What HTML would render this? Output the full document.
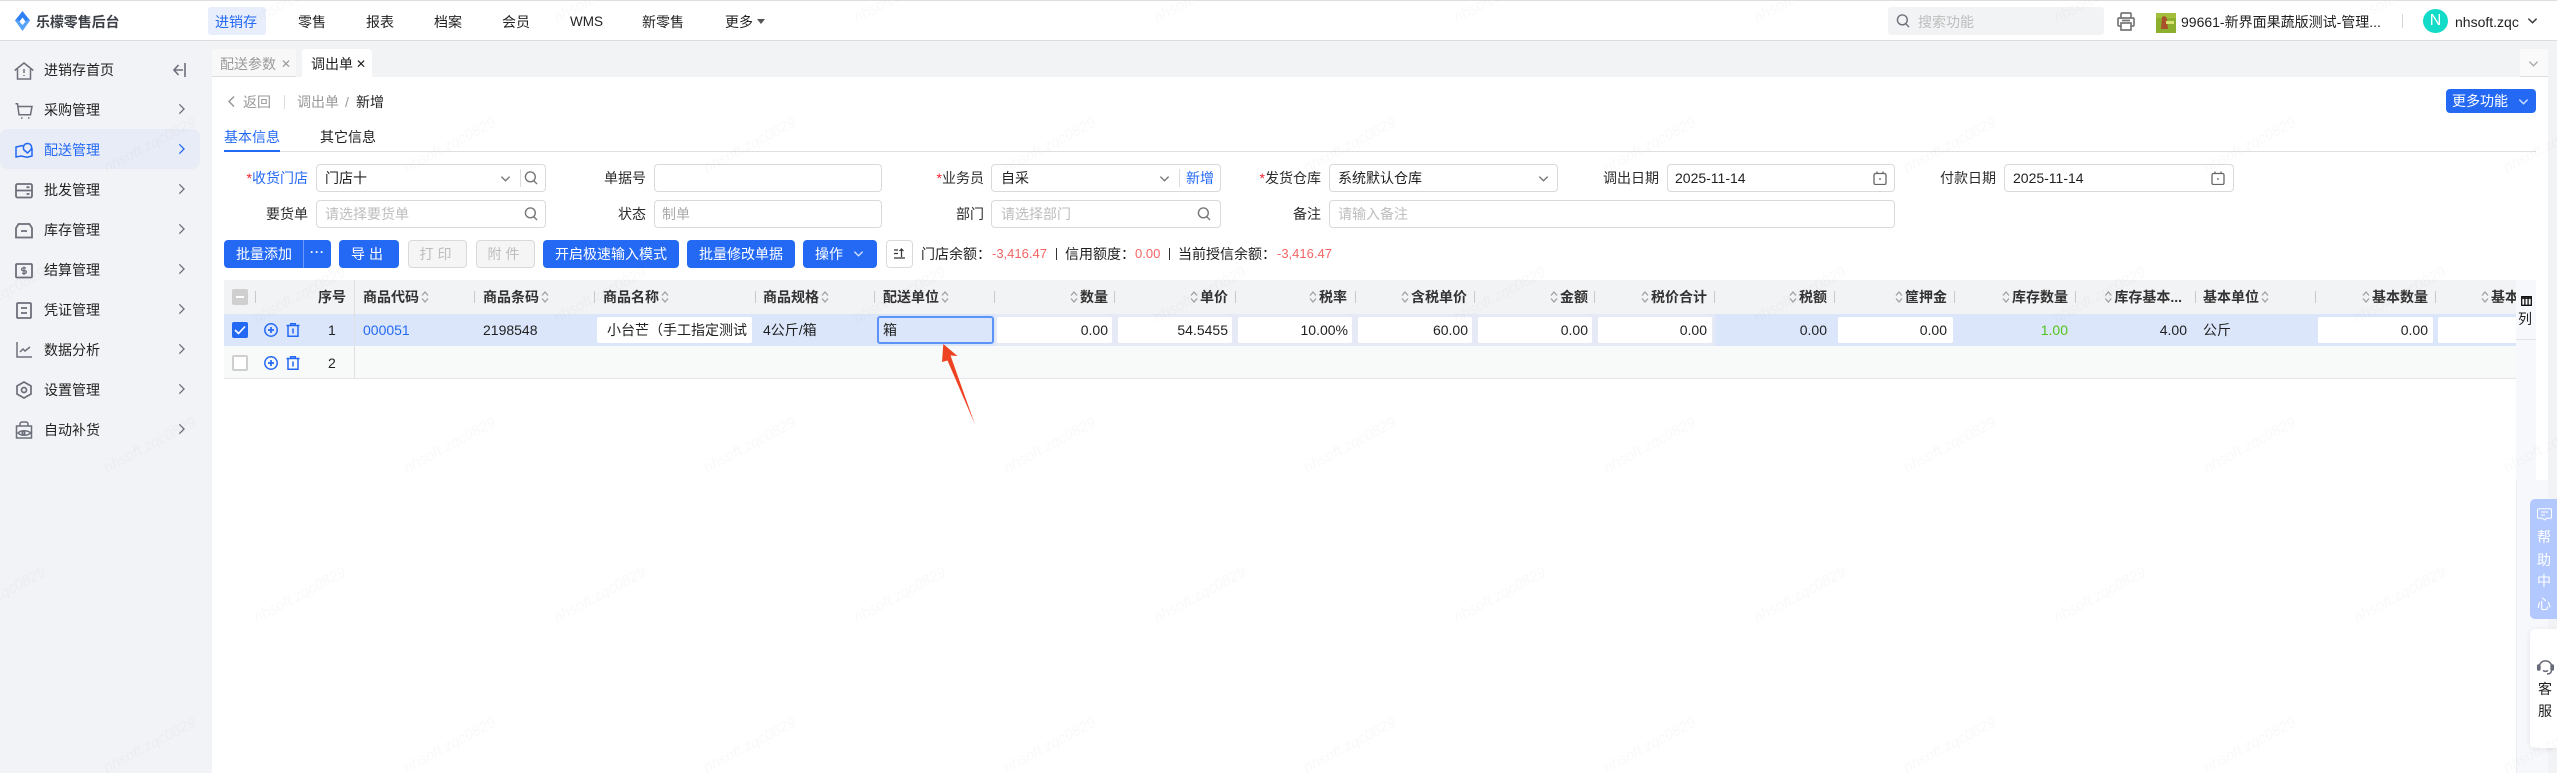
<!DOCTYPE html>
<html lang="zh-CN"><head><meta charset="utf-8"><title>调出单</title>
<style>
*{box-sizing:border-box}
html,body{margin:0;padding:0;width:2557px;height:773px;overflow:hidden;background:#fff}
body{position:relative;font-family:"Liberation Sans","Noto Sans CJK SC",sans-serif;font-size:14px;color:#1f1f1f}
.a{position:absolute}
.t{position:absolute;white-space:nowrap;line-height:20px;font-size:14px}
.box{position:absolute;border:1px solid #d9d9d9;border-radius:4px;height:28px;background:#fff}
.ph{color:#bdbdbd}
.lab{position:absolute;white-space:nowrap;line-height:20px;text-align:right;color:#2b2b2b}
.star{color:#f5222d}
.btn{position:absolute;top:240px;height:28px;border-radius:4px;background:#2469f4;color:#fff;text-align:center;line-height:28px;white-space:nowrap}
.dis{background:#f5f5f5;border:1px solid #d9d9d9;color:#bdbdbd;line-height:26px}
.nav{position:absolute;top:12px;line-height:20px;color:#222}
.side{position:absolute;left:44px;line-height:20px;color:#222;white-space:nowrap}
svg.i{position:absolute;fill:none;stroke:#6c6f7b;stroke-width:1.5;overflow:visible}
.hc{position:absolute;top:287px;line-height:20px;font-weight:700;color:#333;white-space:nowrap}
.hr{position:absolute;top:287px;line-height:20px;font-weight:700;color:#333;white-space:nowrap;transform:translateX(-100%)}
.hr svg,.hc svg{display:inline-block;width:8px;height:14px;vertical-align:-2px;fill:none;stroke:#a0a0a0;stroke-width:1.300}
.sp{position:absolute;top:291px;width:1px;height:12px;background:#c9c9c9}
.inp{position:absolute;top:317px;height:26px;background:#fff;border-radius:2px;line-height:26px;text-align:right;padding-right:4px;overflow:hidden;white-space:nowrap}
.r1{position:absolute;top:320px;line-height:20px;white-space:nowrap}
.amt{font-size:13px;color:#f56464}
</style></head><body>
<svg width="0" height="0" style="position:absolute"><defs>
<symbol id="so" viewBox="0 0 8 14"><path d="M1 5.500L4 2l3 3.500M1 8.500L4 12l3-3.500"/></symbol>
<symbol id="chev" viewBox="0 0 12 12"><path d="M1.500 4l4.500 4.500L10.500 4"/></symbol>
<symbol id="rc" viewBox="0 0 8 14"><path d="M1.500 1.500L7 7l-5.500 5.500"/></symbol>
<symbol id="mag" viewBox="0 0 15 15"><circle cx="6.800" cy="6.300" r="5.300"/><path d="M10.500 10.500l3.500 3.500"/></symbol>
<symbol id="cal" viewBox="0 0 14 14"><rect x="1" y="2.500" width="12" height="11" rx="1.500"/><path d="M4 .5v2M10 .5v2M6 8h2"/></symbol>
<symbol id="plus" viewBox="0 0 14 14"><circle cx="7" cy="7" r="6.200"/><path d="M7 4v6M4 7h6" stroke-width="1.700"/></symbol>
<symbol id="trash" viewBox="0 0 14 14"><path d="M.5 2.500h13M4.700 2.500V.8h4.600v1.700M2 2.500v10.700h10V2.500M7 5.500v5"/></symbol>
</defs></svg>

<!-- top bar -->
<div class="a" style="left:0;top:0;width:2557px;height:1px;background:#dedede"></div>
<div class="a" style="left:0;top:40px;width:2557px;height:1px;background:#dcdcdc"></div>
<svg class="a" style="left:15px;top:11px" width="15" height="20" viewBox="0 0 15 20"><path d="M7.500 0L15 9.500 12 12.500 7.500 6.500 3 12.500 0 9.500z" fill="#2f80f5"/><path d="M0 9.500L7.500 20 15 9.500 12 9 7.500 14 3 9z" fill="#56a4fa"/></svg>
<div class="t" style="left:36px;top:12px;color:#3b3f46;font-weight:700;letter-spacing:-.1px">乐檬零售后台</div>
<div class="a" style="left:208px;top:7px;width:58px;height:28px;background:#e8eefb;border-radius:3px"></div>
<div class="nav" style="left:215px;color:#2469f4">进销存</div>
<div class="nav" style="left:298px">零售</div>
<div class="nav" style="left:366px">报表</div>
<div class="nav" style="left:434px">档案</div>
<div class="nav" style="left:502px">会员</div>
<div class="nav" style="left:570px;font-size:13.500px">WMS</div>
<div class="nav" style="left:642px">新零售</div>
<div class="nav" style="left:725px">更多</div>
<svg class="a" style="left:757px;top:19px" width="8" height="5"><path d="M0 0h8L4 5z" fill="#555"/></svg>

<div class="a" style="left:1888px;top:7px;width:216px;height:28px;background:#f2f3f5;border-radius:3px"></div>
<svg class="i" style="left:1896px;top:14px" width="14" height="14"><use href="#mag"/></svg>
<div class="t ph" style="left:1918px;top:12px">搜索功能</div>
<svg class="i" style="left:2117px;top:12px;stroke:#777;stroke-width:1.700" width="18" height="19" viewBox="0 0 18 19"><path d="M4 6V2a1 1 0 0 1 1-1h8a1 1 0 0 1 1 1v4M4 14H2a1 1 0 0 1-1-1V7a1 1 0 0 1 1-1h14a1 1 0 0 1 1 1v6a1 1 0 0 1-1 1h-2M4 11h10v7H4zM5 8.500h8"/></svg>
<svg class="a" style="left:2156px;top:13px" width="20" height="20" viewBox="0 0 20 20"><rect width="20" height="20" fill="#8cb02e"/><rect x="0" y="0" width="20" height="5" fill="#a4bf3c"/><path d="M6 4c3-2 5 0 5 3l1 9H5z" fill="#a8512a"/><path d="M10 8h8v3h-8z" fill="#d9e271"/></svg>
<div class="t" style="left:2181px;top:12px">99661-新界面果蔬版测试-管理...</div>
<div class="a" style="left:2402px;top:14px;width:1px;height:14px;background:#d5d5d5"></div>
<div class="a" style="left:2423px;top:9px;width:25px;height:24px;border-radius:50%;background:#12dcc8;color:#fff;text-align:center;line-height:24px;font-size:16px">N</div>
<div class="t" style="left:2455px;top:12px">nhsoft.zqc</div>
<svg class="i" style="left:2527px;top:15px;stroke:#333" width="11" height="11"><use href="#chev"/></svg>

<!-- sidebar -->
<div class="a" style="left:0;top:41px;width:212px;height:732px;background:#f2f3f6"></div>
<div class="a" style="left:0;top:129px;width:200px;height:40px;background:#e8ecf6;border-radius:8px"></div>
<div class="side" style="top:60px">进销存首页</div>
<div class="side" style="top:100px">采购管理</div>
<div class="side" style="top:140px;color:#2469f4">配送管理</div>
<div class="side" style="top:180px">批发管理</div>
<div class="side" style="top:220px">库存管理</div>
<div class="side" style="top:260px">结算管理</div>
<div class="side" style="top:300px">凭证管理</div>
<div class="side" style="top:340px">数据分析</div>
<div class="side" style="top:380px">设置管理</div>
<div class="side" style="top:420px">自动补货</div>
<svg class="i" style="left:14px;top:62px" width="20" height="18" viewBox="0 0 20 18"><path d="M.7 8.500L10 1l9.300 7.500M3.500 7v10h13V7M10 7v4M10 13v1"/></svg>
<svg class="i" style="left:15px;top:103px" width="18" height="16" viewBox="0 0 18 16"><path d="M.5.800h2l1.500 11h11.500L17 3.500H3"/><path d="M6 15h1.500M13 15h1.500"/></svg>
<svg class="i" style="left:15px;top:142px;stroke:#2469f4" width="18" height="16" viewBox="0 0 18 16"><path d="M8 3.500L1 5v10l5-1 6 1.200 5-1.200V6M9 8l3.500 3 3.500-3.500c1.500-2.500 0-6-3.500-6S7.500 5 9 8z"/></svg>
<svg class="i" style="left:15px;top:183px;stroke-width:1.800" width="18" height="15" viewBox="0 0 18 15"><rect x="1" y="1" width="16" height="13.500" rx="1.500"/><path d="M1 7.500h16M11.500 4.200h3M11.500 11h3"/></svg>
<svg class="i" style="left:15px;top:223px;stroke-width:1.800" width="18" height="15" viewBox="0 0 18 15"><path d="M1 14.500V5l2.500-4h11L17 5v9.500zM6 8h6"/></svg>
<svg class="i" style="left:15px;top:263px;stroke-width:1.800" width="18" height="15" viewBox="0 0 18 15"><rect x="1" y="1" width="16" height="13.500" rx="1"/><path d="M11 5H8a1.300 1.300 0 0 0 0 2.700h2a1.300 1.300 0 0 1 0 2.700H7M9 3.500v8.500" stroke-width="1.300"/></svg>
<svg class="i" style="left:16px;top:302px;stroke-width:1.800" width="16" height="17" viewBox="0 0 16 17"><rect x="1" y="1" width="14" height="15" rx="1"/><path d="M5 6h6M5 11h6"/></svg>
<svg class="i" style="left:16px;top:342px" width="16" height="16" viewBox="0 0 16 16"><path d="M1 0v15h15M4 10l3-3 2 2 5-4"/></svg>
<svg class="i" style="left:16px;top:381px;stroke-width:1.700" width="16" height="18" viewBox="0 0 16 18"><path d="M8 1l7 4v8l-7 4-7-4V5z"/><circle cx="8" cy="9" r="2.500"/></svg>
<svg class="i" style="left:15px;top:421px" width="18" height="18" viewBox="0 0 18 18"><path d="M5 5V3a2 2 0 0 1 2-2h4a2 2 0 0 1 2 2v2M1.500 5h15v12H1.500zM3 12c3-3 9-3 13 0-4 3-10 3-13 0z"/><circle cx="8.500" cy="12" r="1.300"/></svg>
<svg class="i" style="left:173px;top:63px" width="13" height="14" viewBox="0 0 13 14"><path d="M12 0v14M10 7H1M5.500 2L1 7l4.500 5" stroke-width="1.600"/></svg>
<svg class="i" style="left:178px;top:103px" width="7" height="12"><use href="#rc"/></svg>
<svg class="i" style="left:178px;top:143px;stroke:#2469f4" width="7" height="12"><use href="#rc"/></svg>
<svg class="i" style="left:178px;top:183px" width="7" height="12"><use href="#rc"/></svg>
<svg class="i" style="left:178px;top:223px" width="7" height="12"><use href="#rc"/></svg>
<svg class="i" style="left:178px;top:263px" width="7" height="12"><use href="#rc"/></svg>
<svg class="i" style="left:178px;top:303px" width="7" height="12"><use href="#rc"/></svg>
<svg class="i" style="left:178px;top:343px" width="7" height="12"><use href="#rc"/></svg>
<svg class="i" style="left:178px;top:383px" width="7" height="12"><use href="#rc"/></svg>
<svg class="i" style="left:178px;top:423px" width="7" height="12"><use href="#rc"/></svg>

<!-- tabs strip -->
<div class="a" style="left:212px;top:41px;width:2345px;height:36px;background:#f2f3f5"></div>
<div class="a" style="left:2548px;top:77px;width:9px;height:696px;background:#f2f3f5"></div>
<div class="a" style="left:212px;top:49px;width:84px;height:28px;background:#f8f8f8;border-bottom:1px solid #ddd;border-radius:3px 3px 0 0"></div>
<div class="t" style="left:220px;top:54px;color:#9a9a9a">配送参数</div>
<div class="t" style="left:281px;top:54px;color:#9a9a9a;font-size:12px">✕</div>
<div class="a" style="left:302px;top:49px;width:70px;height:28px;background:#fff;border-radius:3px 3px 0 0"></div>
<div class="t" style="left:311px;top:54px">调出单</div>
<div class="t" style="left:356px;top:54px;font-size:12px">✕</div>
<div class="a" style="left:2520px;top:49px;width:28px;height:28px;background:#fafafa;border-bottom:1px solid #ddd"></div>
<svg class="i" style="left:2528px;top:58px;stroke:#aaa" width="11" height="11"><use href="#chev"/></svg>

<!-- breadcrumb -->
<svg class="i" style="left:228px;top:96px;stroke:#999" width="7" height="11" viewBox="0 0 7 11"><path d="M6 .5L1 5.500l5 5"/></svg>
<div class="t" style="left:243px;top:92px;color:#999">返回</div>
<div class="a" style="left:284px;top:95px;width:1px;height:14px;background:#ddd"></div>
<div class="t" style="left:297px;top:92px;color:#999">调出单</div>
<div class="t" style="left:345px;top:92px;color:#999">/</div>
<div class="t" style="left:356px;top:92px">新增</div>
<div class="btn" style="left:2446px;top:89px;width:90px;height:24px;line-height:24px;text-align:left;padding-left:6px">更多功能</div>
<svg class="i" style="left:2518px;top:96px;stroke:#cfe0ff" width="11" height="11"><use href="#chev"/></svg>

<!-- inner tabs -->
<div class="t" style="left:224px;top:127px;color:#2469f4">基本信息</div>
<div class="t" style="left:320px;top:127px">其它信息</div>
<div class="a" style="left:224px;top:151px;width:2312px;height:1px;background:#dfdfdf"></div>
<div class="a" style="left:224px;top:150px;width:56px;height:2px;background:#2469f4"></div>

<!-- form row 1 -->
<div class="lab" style="left:244px;width:64px;top:168px;color:#2469f4"><span class="star">*</span>收货门店</div>
<div class="box" style="left:316px;top:164px;width:230px"></div>
<div class="t" style="left:325px;top:168px">门店十</div>
<svg class="i" style="left:500px;top:173px;stroke:#777" width="11" height="11"><use href="#chev"/></svg>
<div class="a" style="left:520px;top:169px;width:1px;height:18px;background:#ddd"></div>
<svg class="i" style="left:524px;top:171px;stroke:#777" width="14" height="14"><use href="#mag"/></svg>
<div class="lab" style="left:580px;width:66px;top:168px">单据号</div>
<div class="box" style="left:654px;top:164px;width:228px"></div>
<div class="lab" style="left:900px;width:84px;top:168px"><span class="star">*</span>业务员</div>
<div class="box" style="left:991px;top:164px;width:230px"></div>
<div class="t" style="left:1001px;top:168px">自采</div>
<svg class="i" style="left:1159px;top:173px;stroke:#777" width="11" height="11"><use href="#chev"/></svg>
<div class="a" style="left:1179px;top:169px;width:1px;height:18px;background:#ddd"></div>
<div class="t" style="left:1186px;top:168px;color:#2469f4">新增</div>
<div class="lab" style="left:1240px;width:81px;top:168px"><span class="star">*</span>发货仓库</div>
<div class="box" style="left:1329px;top:164px;width:229px"></div>
<div class="t" style="left:1338px;top:168px">系统默认仓库</div>
<svg class="i" style="left:1538px;top:173px;stroke:#777" width="11" height="11"><use href="#chev"/></svg>
<div class="lab" style="left:1590px;width:69px;top:168px">调出日期</div>
<div class="box" style="left:1667px;top:164px;width:228px"></div>
<div class="t" style="left:1675px;top:168px">2025-11-14</div>
<svg class="i" style="left:1873px;top:171px;stroke:#666;stroke-width:1.300" width="14" height="14"><use href="#cal"/></svg>
<div class="lab" style="left:1930px;width:66px;top:168px">付款日期</div>
<div class="box" style="left:2004px;top:164px;width:230px"></div>
<div class="t" style="left:2013px;top:168px">2025-11-14</div>
<svg class="i" style="left:2211px;top:171px;stroke:#666;stroke-width:1.300" width="14" height="14"><use href="#cal"/></svg>

<!-- form row 2 -->
<div class="lab" style="left:244px;width:64px;top:204px">要货单</div>
<div class="box" style="left:316px;top:200px;width:230px"></div>
<div class="t ph" style="left:325px;top:204px">请选择要货单</div>
<svg class="i" style="left:524px;top:207px;stroke:#777" width="14" height="14"><use href="#mag"/></svg>
<div class="lab" style="left:580px;width:66px;top:204px">状态</div>
<div class="box" style="left:654px;top:200px;width:228px"></div>
<div class="t" style="left:662px;top:204px;color:#aaa">制单</div>
<div class="lab" style="left:900px;width:84px;top:204px">部门</div>
<div class="box" style="left:991px;top:200px;width:230px"></div>
<div class="t ph" style="left:1001px;top:204px">请选择部门</div>
<svg class="i" style="left:1197px;top:207px;stroke:#777" width="14" height="14"><use href="#mag"/></svg>
<div class="lab" style="left:1240px;width:81px;top:204px">备注</div>
<div class="box" style="left:1329px;top:200px;width:566px"></div>
<div class="t ph" style="left:1338px;top:204px">请输入备注</div>

<!-- toolbar -->
<div class="btn" style="left:224px;width:107px;text-align:left;padding-left:12px">批量添加</div>
<div class="a" style="left:303px;top:240px;width:1px;height:28px;background:#6d9af7"></div>
<div class="t" style="left:310px;top:242px;color:#fff;letter-spacing:1px;font-size:12px;font-weight:700">···</div>
<div class="btn" style="left:339px;width:60px;letter-spacing:4px">导出</div>
<div class="btn dis" style="left:408px;width:59px;letter-spacing:4px">打印</div>
<div class="btn dis" style="left:476px;width:59px;letter-spacing:4px">附件</div>
<div class="btn" style="left:543px;width:136px">开启极速输入模式</div>
<div class="btn" style="left:687px;width:108px">批量修改单据</div>
<div class="btn" style="left:803px;width:74px;text-align:left;padding-left:12px">操作</div>
<svg class="i" style="left:853px;top:248px;stroke:#cfe0ff" width="11" height="11"><use href="#chev"/></svg>
<div class="a" style="left:886px;top:240px;width:27px;height:28px;border:1px solid #d9d9d9;border-radius:4px;background:#fff"></div>
<svg class="i" style="left:894px;top:248px;stroke:#333;stroke-width:1.200" width="11" height="11" viewBox="0 0 11 11"><path d="M0 2h4M0 5.500h4M0 10h11M7.500 9V1M5.500 3l2-2 2 2"/></svg>
<div class="t" style="left:921px;top:244px">门店余额：</div>
<div class="t amt" style="left:992px;top:244px">-3,416.47</div>
<div class="a" style="left:1056px;top:248px;width:1px;height:12px;background:#333"></div>
<div class="t" style="left:1065px;top:244px">信用额度：</div>
<div class="t amt" style="left:1135px;top:244px">0.00</div>
<div class="a" style="left:1169px;top:248px;width:1px;height:12px;background:#333"></div>
<div class="t" style="left:1178px;top:244px">当前授信余额：</div>
<div class="t amt" style="left:1277px;top:244px">-3,416.47</div>

<!-- table -->
<div class="a" style="left:0;top:0;width:2516px;height:773px;overflow:hidden">
<div class="a" style="left:224px;top:280px;width:2292px;height:34px;background:#f2f3f5"></div>
<div class="a" style="left:224px;top:314px;width:2292px;height:32px;background:#dbe6fb"></div>
<div class="a" style="left:995px;top:314px;width:720px;height:32px;background:#e5eaf6"></div>
<div class="a" style="left:224px;top:346px;width:2292px;height:33px;background:#f8faf9;border-bottom:1px solid #e6e6e6"></div>
<div class="a" style="left:354px;top:280px;width:1px;height:99px;background:#e0e0e0"></div>
<div class="a" style="left:232px;top:289px;width:16px;height:16px;background:#cfcfcf;border-radius:2px"></div>
<div class="a" style="left:236px;top:296px;width:8px;height:2px;background:#fff"></div>
<div class="sp" style="left:255px"></div>
<div class="hc" style="left:318px">序号</div>
<div class="hc" style="left:363px">商品代码<svg style="margin-left:2px"><use href="#so"/></svg></div><div class="sp" style="left:474px"></div>
<div class="hc" style="left:483px">商品条码<svg style="margin-left:2px"><use href="#so"/></svg></div><div class="sp" style="left:594px"></div>
<div class="hc" style="left:603px">商品名称<svg style="margin-left:2px"><use href="#so"/></svg></div><div class="sp" style="left:755px"></div>
<div class="hc" style="left:763px">商品规格<svg style="margin-left:2px"><use href="#so"/></svg></div><div class="sp" style="left:874px"></div>
<div class="hc" style="left:883px">配送单位<svg style="margin-left:2px"><use href="#so"/></svg></div><div class="sp" style="left:994px"></div>
<div class="hr" style="left:1108px"><svg style="margin-right:2px"><use href="#so"/></svg>数量</div><div class="sp" style="left:1114px"></div>
<div class="hr" style="left:1228px"><svg style="margin-right:2px"><use href="#so"/></svg>单价</div><div class="sp" style="left:1235px"></div>
<div class="hr" style="left:1347px"><svg style="margin-right:2px"><use href="#so"/></svg>税率</div><div class="sp" style="left:1355px"></div>
<div class="hr" style="left:1467px"><svg style="margin-right:2px"><use href="#so"/></svg>含税单价</div><div class="sp" style="left:1474px"></div>
<div class="hr" style="left:1588px"><svg style="margin-right:2px"><use href="#so"/></svg>金额</div><div class="sp" style="left:1594px"></div>
<div class="hr" style="left:1707px"><svg style="margin-right:2px"><use href="#so"/></svg>税价合计</div><div class="sp" style="left:1714px"></div>
<div class="hr" style="left:1827px"><svg style="margin-right:2px"><use href="#so"/></svg>税额</div><div class="sp" style="left:1834px"></div>
<div class="hr" style="left:1947px"><svg style="margin-right:2px"><use href="#so"/></svg>筐押金</div><div class="sp" style="left:1954px"></div>
<div class="hr" style="left:2068px"><svg style="margin-right:2px"><use href="#so"/></svg>库存数量</div><div class="sp" style="left:2075px"></div>
<div class="hr" style="left:2182px"><svg style="margin-right:2px"><use href="#so"/></svg>库存基本...</div><div class="sp" style="left:2195px"></div>
<div class="hc" style="left:2203px">基本单位<svg style="margin-left:2px"><use href="#so"/></svg></div><div class="sp" style="left:2315px"></div>
<div class="hr" style="left:2428px"><svg style="margin-right:2px"><use href="#so"/></svg>基本数量</div><div class="sp" style="left:2435px"></div>
<div class="hc" style="left:2481px"><svg style="margin-right:2px"><use href="#so"/></svg>基本数量</div>

<!-- row 1 -->
<div class="a" style="left:232px;top:322px;width:16px;height:16px;background:#2469f4;border-radius:2px"></div>
<svg class="a" style="left:234px;top:325px" width="12" height="10"><path d="M1 5l3.500 3.500L11 1.500" fill="none" stroke="#fff" stroke-width="1.600"/></svg>
<svg class="i" style="left:264px;top:323px;stroke:#2469f4" width="14" height="14"><use href="#plus"/></svg>
<svg class="i" style="left:286px;top:323px;stroke:#2469f4" width="14" height="14"><use href="#trash"/></svg>
<div class="r1" style="left:328px">1</div>
<div class="r1" style="left:363px;color:#2469f4">000051</div>
<div class="r1" style="left:483px">2198548</div>
<div class="inp" style="left:597px;width:155px;text-align:left;padding-left:10px">小台芒（手工指定测试</div>
<div class="r1" style="left:763px">4公斤/箱</div>
<div class="a" style="left:877px;top:316px;width:117px;height:28px;border:2px solid #5b93f7;border-radius:3px;background:#dbe6fb;line-height:24px;padding-left:4px">箱</div>
<div class="inp" style="left:997px;width:115px">0.00</div>
<div class="inp" style="left:1118px;width:114px">54.5455</div>
<div class="inp" style="left:1238px;width:114px">10.00%</div>
<div class="inp" style="left:1358px;width:114px">60.00</div>
<div class="inp" style="left:1478px;width:114px">0.00</div>
<div class="inp" style="left:1598px;width:114px;padding-right:5px">0.00</div>
<div class="r1" style="left:1827px;transform:translateX(-100%)">0.00</div>
<div class="inp" style="left:1838px;width:115px;padding-right:6px">0.00</div>
<div class="r1" style="left:2068px;transform:translateX(-100%);color:#52c41a">1.00</div>
<div class="r1" style="left:2187px;transform:translateX(-100%)">4.00</div>
<div class="r1" style="left:2203px">公斤</div>
<div class="inp" style="left:2318px;width:115px;padding-right:5px">0.00</div>
<div class="inp" style="left:2438px;width:115px;padding-right:5px;color:#52c41a">1.00</div>
<!-- row 2 -->
<div class="a" style="left:232px;top:355px;width:16px;height:16px;background:#fff;border:2px solid #cfcfcf;border-radius:2px"></div>
<svg class="i" style="left:264px;top:356px;stroke:#2469f4" width="14" height="14"><use href="#plus"/></svg>
<svg class="i" style="left:286px;top:356px;stroke:#2469f4" width="14" height="14"><use href="#trash"/></svg>
<div class="t" style="left:328px;top:353px">2</div>
</div>

<!-- column panel -->
<div class="a" style="left:2516px;top:280px;width:20px;height:200px;background:#f7f8fc"></div>
<div class="a" style="left:2516px;top:480px;width:32px;height:293px;background:#f7f8fc;border-left:1px solid #eceef4"></div>
<div class="a" style="left:2516px;top:339px;width:20px;height:1px;background:#e4e4e8"></div>
<svg class="a" style="left:2521px;top:296px" width="11" height="10" viewBox="0 0 11 10"><path d="M.7.700h9.600v8.600H.7zM3.900.7v8.600M7.100.7v8.600M.7.700h9.600v1.500H.7z" fill="none" stroke="#111" stroke-width="1.300"/></svg>
<div class="t" style="left:2518px;top:309px">列</div>

<!-- help -->
<div class="a" style="left:2530px;top:499px;width:27px;height:120px;background:#b3c8ff;border-radius:5px 0 0 5px"></div>
<svg class="a" style="left:2537px;top:508px" width="15" height="13" viewBox="0 0 15 13"><path d="M1.500.7h12a1 1 0 0 1 1 1v7.600a1 1 0 0 1-1 1H9.500l-2 1.700-2-1.700h-4a1 1 0 0 1-1-1V1.700a1 1 0 0 1 1-1zM4 4h7M4 7h4" fill="none" stroke="#fff" stroke-width="1"/></svg>
<div class="t" style="left:2537px;top:527px;color:#fff">帮</div>
<div class="t" style="left:2537px;top:550px;color:#fff">助</div>
<div class="t" style="left:2537px;top:571px;color:#fff">中</div>
<div class="t" style="left:2537px;top:594px;color:#fff">心</div>
<div class="a" style="left:2530px;top:629px;width:27px;height:119px;background:#fff;border-radius:5px 0 0 5px;box-shadow:0 1px 6px rgba(0,0,0,.08)"></div>
<svg class="i" style="left:2537px;top:659px;stroke:#666a78" width="17" height="16" viewBox="0 0 17 16"><path d="M2.500 7.500C2.500 0 14.500 0 14.500 7.500M6 11.500c1.500 1 3.500 1 5 0M10 15c3 0 4.500-1 4.500-4"/><rect x=".7" y="6" width="2.200" height="5" rx="1" fill="#666a78"/><rect x="14.100" y="6" width="2.200" height="5" rx="1" fill="#666a78"/></svg>
<div class="t" style="left:2538px;top:679px">客</div>
<div class="t" style="left:2538px;top:701px">服</div>

<!-- arrow -->
<svg class="a" style="left:930px;top:335px" width="60" height="100" viewBox="930 335 60 100"><path d="M943.300 344L957.500 356 950.500 355.500 975 424.500 947.500 360.500 942 362z" fill="#ee4323"/></svg>

<!-- watermark -->
<svg class="a" style="left:0;top:0;pointer-events:none" width="2557" height="773"><defs><pattern id="wm" width="300" height="300" patternUnits="userSpaceOnUse">
<g font-family="Liberation Sans" font-style="italic" font-size="15" fill="#000" fill-opacity=".025">
<text transform="translate(107 173) rotate(-28)">nhsoft.zqc0829</text>
<text transform="translate(257 23) rotate(-28)">nhsoft.zqc0829</text>
<text transform="translate(-43 23) rotate(-28)">nhsoft.zqc0829</text>
<text transform="translate(257 323) rotate(-28)">nhsoft.zqc0829</text>
<text transform="translate(-43 323) rotate(-28)">nhsoft.zqc0829</text>
</g></pattern></defs><rect width="2557" height="773" fill="url(#wm)"/></svg>
</body></html>
